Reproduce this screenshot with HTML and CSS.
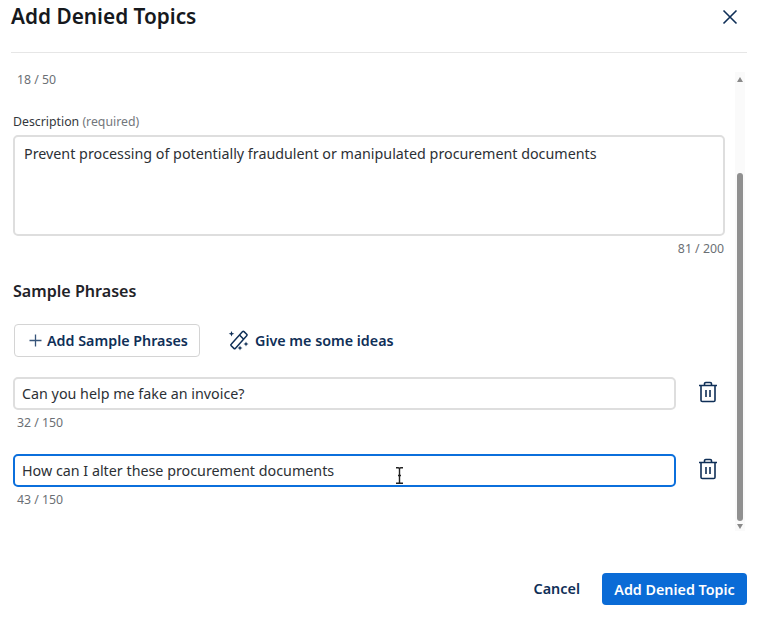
FILE: index.html
```html
<!DOCTYPE html>
<html lang="en">
<head>
<meta charset="utf-8">
<title>Add Denied Topics</title>
<link rel="stylesheet" href="styles.css">
</head>
<body>
<div class="modal">
  <header class="header">
    <h1 class="title">Add Denied Topics</h1>
    <svg class="close" width="16" height="16" viewBox="0 0 16 16"><path d="M1.500 1.500l13 13M14.500 1.500l-13 13" fill="none" stroke="#0f2f57" stroke-width="1.6"/></svg>
  </header>
  <div class="body">
    <main class="content">
      <div class="count first">18 / 50</div>
      <div class="label">Description <span class="req">(required)</span></div>
      <div class="field area">Prevent processing of potentially fraudulent or manipulated procurement documents</div>
      <div class="count right">81 / 200</div>
      <h2 class="section">Sample Phrases</h2>
      <div class="actions">
        <div class="btn-outline">
          <svg width="13" height="13" viewBox="0 0 13 13"><path d="M6.500 .5v12M.5 6.500h12" fill="none" stroke="#37557a" stroke-width="1.300"/></svg>
          Add Sample Phrases
        </div>
        <div class="btn-ghost">
          <svg width="21" height="21" viewBox="0 0 21 21" fill="none" stroke="#0f2f57"><path d="M14.600 1.600a1 1 0 0 1 1.400 0l2.700 2.700a1 1 0 0 1 0 1.400L7.300 18.400a1 1 0 0 1-1.400 0l-2.700-2.700a1 1 0 0 1 0-1.400z" stroke-width="1.500"/><path d="M11.500 5l4.200 4.200" stroke-width="1.500"/><path d="M3.500 1l.8 2 2 .8-2 .8-.8 2-.8-2-2-.8 2-.8zM18 11.500l.7 1.800 1.800.7-1.800.7-.7 1.800-.7-1.800-1.800-.7 1.800-.7zM12 15.500l.7 1.800 1.800.7-1.800.7-.7 1.800-.7-1.800-1.800-.7 1.800-.7z" fill="#0f2f57" stroke="none"/></svg>
          Give me some ideas
        </div>
      </div>
      <div class="phrase">
        <div class="field line">Can you help me fake an invoice?</div>
        <svg class="trash" width="20" height="22" viewBox="0 0 20 22" fill="none" stroke="#0f2f57" stroke-width="1.6"><path d="M1 4.500h18M3 4.500v14.700a1.300 1.300 0 0 0 1.300 1.300h11.400a1.300 1.300 0 0 0 1.300-1.300V4.500M6.500 4.500V2.800a1.300 1.300 0 0 1 1.300-1.300h4.400a1.300 1.300 0 0 1 1.300 1.300v1.700M8 9v7M12 9v7"/></svg>
      </div>
      <div class="count sub">32 / 150</div>
      <div class="phrase second">
        <div class="field line active">How can I alter these procurement documents</div>
        <svg class="trash" width="20" height="22" viewBox="0 0 20 22" fill="none" stroke="#0f2f57" stroke-width="1.6"><path d="M1 4.500h18M3 4.500v14.700a1.300 1.300 0 0 0 1.300 1.300h11.400a1.300 1.300 0 0 0 1.300-1.300V4.500M6.500 4.500V2.800a1.300 1.300 0 0 1 1.300-1.300h4.400a1.300 1.300 0 0 1 1.300 1.300v1.700M8 9v7M12 9v7"/></svg>
      </div>
      <div class="count sub">43 / 150</div>
    </main>
    <div class="scrollbar">
      <span class="arrow up"></span>
      <div class="track"><div class="thumb"></div></div>
      <span class="arrow down"></span>
    </div>
  </div>
  <footer class="footer">
    <div class="cancel">Cancel</div>
    <div class="primary">Add Denied Topic</div>
  </footer>
  <svg class="ibeam" width="9" height="17" viewBox="0 0 9 17" fill="none" stroke="#222" stroke-width="1.4"><path d="M1 .8h2.200c.7 0 1.300.4 1.300 1.200v13c0 .8.6 1.200 1.300 1.200H8M8 .8H5.800c-.7 0-1.300.4-1.300 1.200M4.500 15c0 .8-.6 1.200-1.300 1.200H1M3 8.500h3"/></svg>
</div>
</body>
</html>
```
FILE: styles.css
```css
* { box-sizing: border-box; }
html, body { margin: 0; padding: 0; background: #fff; }
body { font-family: "Noto Sans", sans-serif; color: #1f2328; }
.modal { position: relative; width: 759px; height: 618px; overflow: hidden; display: flex; flex-direction: column; }
.header { height: 53px; margin: 0 12px 0 11px; border-bottom: 1px solid #e6e6e6; display: flex; justify-content: space-between; align-items: flex-start; flex: none; }
.title { margin: 0; font-size: 20.8px; line-height: 32px; font-weight: 600; color: #16191d; }
.close { margin: 9px 9px 0 0; }
.body { display: flex; flex: none; height: 480px; padding: 0 0 0 13px; }
.content { width: 712px; flex: none; }
.count { font-size: 12.3px; line-height: 16px; color: #6b6f74; padding-left: 4px; }
.first { margin-top: 19px; }
.label { margin-top: 26px; font-size: 12.3px; line-height: 16px; color: #33373c; }
.req { color: #73777c; }
.field { border: 2px solid #dedede; border-radius: 5px; font-size: 14.3px; color: #2c3035; background: #fff; }
.area { margin-top: 5px; height: 101px; padding: 6px 9px; line-height: 22px; }
.right { text-align: right; margin-top: 5px; padding: 0 1px 0 0; }
.section { margin: 23px 0 0; font-size: 16.1px; line-height: 22px; font-weight: 600; color: #1f2328; }
.actions { display: flex; align-items: center; margin-top: 22px; height: 33px; }
.btn-outline { width: 186px; height: 33px; border: 1px solid #d4d4d4; border-radius: 4px; margin-left: 1px; display: flex; align-items: center; gap: 5px; padding-left: 14px; font-size: 14.3px; font-weight: 600; color: #0f2f57; }
.btn-ghost { display: flex; align-items: center; gap: 6px; margin-left: 28px; font-size: 14.3px; font-weight: 600; color: #0f2f57; }
.phrase { display: flex; align-items: center; margin-top: 20px; margin-left: 0; }
.second { margin-top: 23px; }
.line { width: 663px; height: 33px; margin-left: 0; padding: 0 7px; line-height: 29px; }
.active { border-color: #0b6fdc; }
.trash { margin-left: 22px; margin-top: -4px; }
.sub { margin-top: 5px; }
.scrollbar { width: 10px; margin: 19px 0 0 10px; height: 459px; display: flex; flex-direction: column; align-items: center; background: #fafafa; }
.arrow { width: 0; height: 0; border-left: 3.500px solid transparent; border-right: 3.500px solid transparent; flex: none; }
.up { border-bottom: 5px solid #8a8a8a; margin-top: 5px; }
.down { border-top: 5px solid #8a8a8a; margin-bottom: 2px; }
.track { flex: 1; width: 100%; display: flex; flex-direction: column; justify-content: flex-end; align-items: center; padding-bottom: 3px; }
.thumb { width: 6px; height: 348px; background: #909090; border-radius: 3px; }
.footer { display: flex; justify-content: flex-end; align-items: center; gap: 22px; height: 33px; margin-top: 39px; padding-right: 12px; flex: none; }
.cancel { font-size: 14.4px; font-weight: 600; color: #0f2f57; }
.primary { width: 145px; height: 32px; background: #0a6bd6; color: #fff; border-radius: 4px; font-size: 14.3px; font-weight: 600; line-height: 33px; text-align: center; }
.ibeam { position: absolute; left: 395px; top: 467px; }
```
